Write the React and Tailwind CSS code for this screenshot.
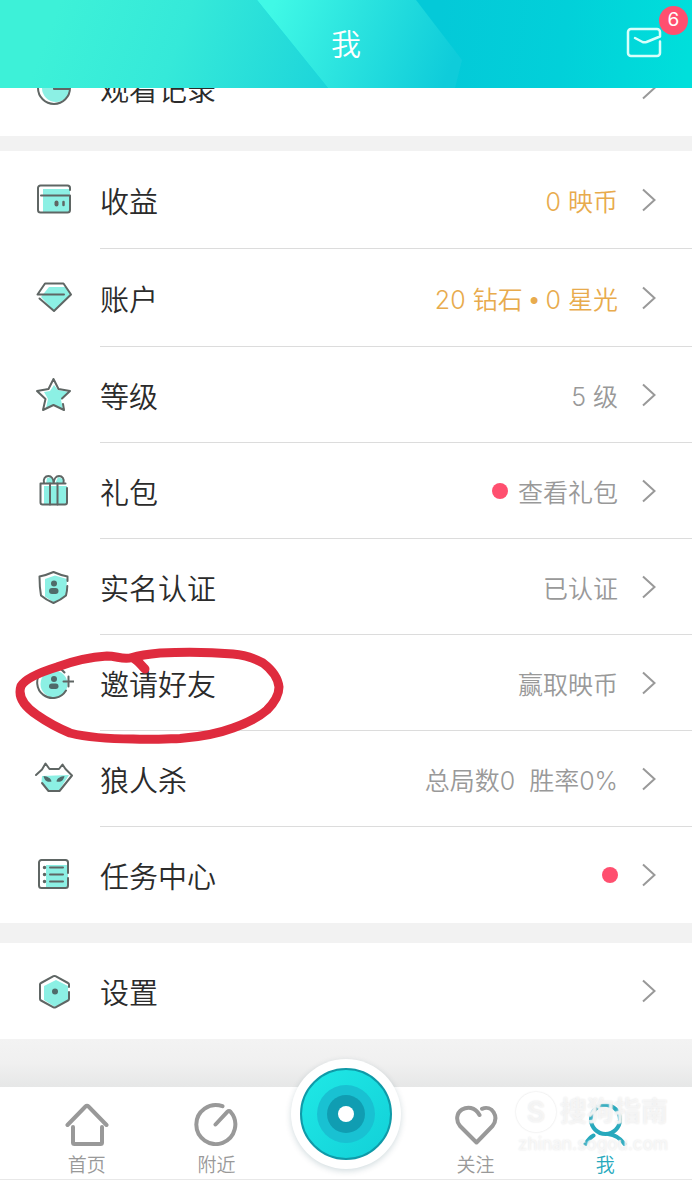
import clsx from "clsx";

const ic = "size-10 shrink-0";
const line = {
  fill: "none",
  stroke: "#5f6664",
  strokeWidth: 2,
  strokeLinecap: "round",
  strokeLinejoin: "round",
};

function HistoryIcon() {
  return (
    <svg viewBox="0 0 40 40" className={ic} aria-hidden="true">
      <circle cx="22" cy="20" r="14" fill="#8cf0e4" />
      <circle cx="20" cy="20" r="16" {...line} />
      <path d="M20 9v12h15" {...line} />
    </svg>
  );
}

function IncomeIcon() {
  return (
    <svg viewBox="0 0 40 40" className={ic} aria-hidden="true">
      <path d="M9 9h27v23H9z" fill="#8cf0e4" />
      <path
        d="M36 10V8a2.500 2.500 0 0 0-2.500-2.500h-27A2.500 2.500 0 0 0 4 8v22a2.500 2.500 0 0 0 2.500 2.500h27A2.500 2.500 0 0 0 36 30V15.500H7"
        {...line}
      />
      <path d="M22.500 22.500v2" {...line} strokeWidth="4" />
      <path d="M29.500 22v3" {...line} strokeWidth="2.500" />
    </svg>
  );
}

function DiamondIcon() {
  return (
    <svg viewBox="0 0 40 40" className={ic} aria-hidden="true">
      <path d="M15 9h17l5 7-17 17L7 19z" fill="#8cf0e4" />
      <path d="M30 16.500H3.500L11 5.500h18.500l7.500 11-17 16.500L5.500 20.500" {...line} />
    </svg>
  );
}

function StarIcon() {
  return (
    <svg viewBox="0 0 40 40" className={ic} aria-hidden="true">
      <path d="M20 10l4 5 11 2-8 8 2 9-9-4-8 3 2-9-4-7 6-1z" fill="#8cf0e4" />
      <path
        d="M28 23.500l8-7.500-11.500-2-5-10-5 10-11.500 2 8.500 8-2.500 11 10.500-5 10.500 5-1-6"
        {...line}
      />
    </svg>
  );
}

function GiftIcon() {
  return (
    <svg viewBox="0 0 40 40" className={ic} aria-hidden="true">
      <path d="M10 15h23v18H10zM13 7l5-1 2 6-8 1zM24 6l5 2 1 5h-9z" fill="#8cf0e4" />
      <path d="M31.500 12.500h-25v19a2 2 0 0 0 2 2h22.500a2 2 0 0 0 2-2V17" {...line} />
      <path d="M16 12.500v21M23.500 12.500v21" {...line} />
      <path
        d="M10 12c-1-4 1-7 4.500-7 3 0 5 3 5.200 7 .2-4 2.300-7 5.300-7 3.500 0 5.500 3 4.500 7"
        {...line}
      />
    </svg>
  );
}

function ShieldIcon() {
  return (
    <svg viewBox="0 0 40 40" className={ic} aria-hidden="true">
      <path d="M21 8.500l12 3.500-1 17-12 6.500-9-6V12z" fill="#8cf0e4" />
      <path
        d="M33.500 14V9.500C28 8.500 24 7 19.500 5 15 7 10.500 8.500 5.500 9.500c0 7 .5 13.500 1.500 19C11 32 15 34 19.500 36c4.500-2 8.500-4 12.500-7.500.8-3 1.200-6 1.300-9.500"
        {...line}
      />
      <circle cx="20" cy="16.500" r="3" fill="#4f6b6a" />
      <rect x="15" y="21" width="9.500" height="6" rx="3" fill="#4f6b6a" />
    </svg>
  );
}

function InviteIcon() {
  return (
    <svg viewBox="0 0 40 40" className={ic} aria-hidden="true">
      <circle cx="20" cy="21" r="13.500" fill="#8cf0e4" />
      <path d="M30.500 9.500A15.500 15.500 0 1 0 32 27.500M34.500 13.500v10M29.500 18.500h10" {...line} />
      <circle cx="20" cy="16" r="3" fill="#4f6b6a" />
      <rect x="15" y="20.500" width="9.500" height="5.500" rx="2.700" fill="#4f6b6a" />
    </svg>
  );
}

function WolfIcon() {
  return (
    <svg viewBox="0 0 40 40" className={ic} aria-hidden="true">
      <path d="M8 17l27-1-10 15.500H14.500L7.500 23z" fill="#8cf0e4" />
      <path
        d="M2 16l6-5.500 3.500-6 4 5.500h9.500l3.500-4.500 3 4.500 6.500 6.500-12.500 15.500h-11l-6.500-8"
        {...line}
      />
      <path d="M9.500 17c4 .5 7.500 2 8 5.500-4 1-7-.5-8-5.500zM30.500 17c-4 .5-7.500 2-8 5.500 4 1 7-.5 8-5.500z" fill="#4f6b6a" />
    </svg>
  );
}

function TaskIcon() {
  return (
    <svg viewBox="0 0 40 40" className={ic} aria-hidden="true">
      <path d="M12 10h22v23H12z" fill="#8cf0e4" />
      <path
        d="M34 18V7.500A2.500 2.500 0 0 0 31.500 5h-24A2.500 2.500 0 0 0 5 7.500v23A2.500 2.500 0 0 0 7.500 33h24a2.500 2.500 0 0 0 2.500-2.500V23"
        {...line}
      />
      <path d="M16 12.500h13M16 19.500h13M16 26.500h13" {...line} />
      <path d="M10.500 12.500h.01M10.500 19.500h.01M10.500 26.500h.01" {...line} strokeWidth="3.500" />
    </svg>
  );
}

function SettingsIcon() {
  return (
    <svg viewBox="0 0 40 40" className={ic} aria-hidden="true">
      <path d="M22 9l12 6v14l-13 7-11-7V15z" fill="#8cf0e4" />
      <path
        d="M35 16v-2.500q0-1-1-1.500L21.500 5.200q-1-.5-2 0L7 12q-1 .5-1 1.500v14.500q0 1 1 1.500l12.500 6.800q1 .5 2 0L34 29.500q1-.5 1-1.500v-7"
        {...line}
      />
      <circle cx="21" cy="20.500" r="3" fill="#4f6b6a" />
    </svg>
  );
}

function Chevron() {
  return (
    <svg viewBox="0 0 14 24" className="h-6 w-3.5 shrink-0" aria-hidden="true">
      <path d="M1 1.500l11.500 10.500L1 22.500" fill="none" stroke="#999" strokeWidth="2" />
    </svg>
  );
}

// hand-drawn red ring around the invite row
function Highlight() {
  return (
    <svg
      viewBox="12 643 276 102"
      className="pointer-events-none absolute top-2 left-3 z-10 h-[102px] w-[276px]"
      aria-hidden="true"
    >
      <path
        d="M145 669C141 665 138 660 132 657.500C123 660 117 656 107 656C90 657 73 661 57 667C41 672 25 679 21 686C17 698 25 707 37 715C47 722 58 728 70 733C90 738 112 739 133 739C150 740 165 739 180 738.500C200 737 217 734 233 728C247 723 258 718 267 710C274 703 279 696 279 687C278 678 271 669 263 663C254 658 245 655 233 654C208 652 184 652 160 653C150 654 141 655 132 657.500"
        fill="none"
        stroke="#df2b3e"
        strokeWidth="9"
        strokeLinecap="round"
        strokeLinejoin="round"
      />
    </svg>
  );
}

const balance = (
  <>
    20 钻石 <span className="font-['Liberation_Sans',sans-serif]">•</span> 0 星光
  </>
);

const groups = [
  [
    { label: "收益", icon: IncomeIcon, value: "0 映币", gold: true },
    { label: "账户", icon: DiamondIcon, value: balance, gold: true },
    { label: "等级", icon: StarIcon, value: "5 级" },
    { label: "礼包", icon: GiftIcon, value: "查看礼包", dot: true },
    { label: "实名认证", icon: ShieldIcon, value: "已认证" },
    { label: "邀请好友", icon: InviteIcon, value: "赢取映币", circled: true },
    { label: "狼人杀", icon: WolfIcon, value: "总局数0  胜率0%" },
    { label: "任务中心", icon: TaskIcon, dot: true },
  ],
  [{ label: "设置", icon: SettingsIcon }],
];

function Row({ item }) {
  const Icon = item.icon;
  return (
    <li className="group relative">
      <a
        href="#"
        className={clsx("flex items-stretch gap-[26px] pl-[34px]", item.gold ? "h-[98px]" : "h-24")}
      >
        <span className="flex items-center">
          <Icon />
        </span>
        <span className="flex flex-1 items-center gap-6 border-b border-[#dcdcdc] pr-9 group-last:border-b-0">
          <span className="flex-1 text-[29px] leading-10 font-[350] text-[#2b2b2b]">{item.label}</span>
          <span className="flex items-center gap-[10px]">
            {item.dot && <span className="size-4 rounded-full bg-[#ff4f6f]" />}
            {item.value && (
              <span
                className={clsx(
                  "pt-1 font-['Inter','Noto_Sans_CJK_SC',sans-serif] text-[25px] leading-10 font-[350] whitespace-pre",
                  item.gold ? "text-[#e8ab4d]" : "text-[#999]"
                )}
              >
                {item.value}
              </span>
            )}
          </span>
          <Chevron />
        </span>
      </a>
      {item.circled && <Highlight />}
    </li>
  );
}

function Header() {
  return (
    <header className="relative z-20 flex h-[88px] items-center justify-center overflow-hidden font-['Inter','Noto_Sans_CJK_SC',sans-serif]">
      <svg
        viewBox="0 0 692 88"
        preserveAspectRatio="none"
        className="absolute inset-0 h-full w-full"
        aria-hidden="true"
      >
        <defs>
          <linearGradient id="hd-left" gradientUnits="userSpaceOnUse" x1="60" y1="0" x2="320" y2="100">
            <stop offset="0" stopColor="#3df1d8" />
            <stop offset="0.450" stopColor="#35e9d9" />
            <stop offset="1" stopColor="#1dd5da" />
          </linearGradient>
          <linearGradient id="hd-mid" gradientUnits="userSpaceOnUse" x1="275" y1="0" x2="450" y2="70">
            <stop offset="0" stopColor="#40f9e6" />
            <stop offset="0.450" stopColor="#2be3df" />
            <stop offset="1" stopColor="#0fccda" />
          </linearGradient>
          <linearGradient id="hd-right" gradientUnits="userSpaceOnUse" x1="440" y1="0" x2="692" y2="30">
            <stop offset="0" stopColor="#04c9d8" />
            <stop offset="0.500" stopColor="#02d0d9" />
            <stop offset="1" stopColor="#00dfdb" />
          </linearGradient>
        </defs>
        <path d="M0 0h692v88H0z" fill="url(#hd-right)" />
        <path d="M0 0h257l71 88H0z" fill="url(#hd-left)" />
        <path d="M257 0h159l46 60-7 28H328z" fill="url(#hd-mid)" />
      </svg>
      <h1 className="relative text-[30px] leading-10 font-[350] text-white">我</h1>
      <button type="button" aria-label="消息" className="absolute top-6 right-[30px]">
        <svg viewBox="0 0 36 36" className="size-9" aria-hidden="true">
          <path
            d="M34 17.500V29a3 3 0 0 1-3 3H5a3 3 0 0 1-3-3V8a3 3 0 0 1 3-3h26a3 3 0 0 1 3 3v4.500L20.500 18q-2 .7-4 0L9 14"
            fill="none"
            stroke="#d8fffb"
            strokeWidth="2.500"
            strokeLinecap="round"
            strokeLinejoin="round"
          />
        </svg>
      </button>
      <span className="absolute top-[6px] right-1 flex size-[29px] items-center justify-center rounded-full bg-[#ff4f6f] text-[19px] text-white">
        6
      </span>
    </header>
  );
}

const nav = {
  fill: "none",
  stroke: "currentColor",
  strokeWidth: 4,
  strokeLinecap: "round",
  strokeLinejoin: "round",
};

function Tab({ label, active, children }) {
  return (
    <a
      href="#"
      className={clsx(
        "flex flex-col items-center gap-[6px] pt-[15px]",
        active ? "text-[#27a9bd]" : "text-[#999]"
      )}
    >
      <svg viewBox="0 0 44 44" className="size-11" aria-hidden="true">
        {children}
      </svg>
      <span className="text-[19px] leading-6 font-[350]">{label}</span>
    </a>
  );
}

function Watermark() {
  return (
    <div className="pointer-events-none absolute top-[5px] right-6 flex flex-col items-end font-['Inter','Noto_Sans_CJK_SC',sans-serif] text-white/60 [text-shadow:0_0_2px_#e2e2e2]">
      <div className="flex items-center gap-1">
        <span className="flex size-10 items-center justify-center rounded-full border-3 border-white/60 text-[28px] leading-8 font-bold shadow-[0_0_2px_#d8d8d8]">
          S
        </span>
        <span className="text-[27px] leading-10 font-bold">搜狗指南</span>
      </div>
      <div className="text-[17px] leading-6 font-medium">zhinan.sogou.com</div>
    </div>
  );
}

function TabBar() {
  return (
    <nav className="relative grid h-[93px] grid-cols-5 border-b border-[#e8e8e8] bg-white px-[22px]">
      <Tab label="首页">
        <path d="M2.500 23L20.500 4.500q1.500-1.500 3 0L41.500 23M8 25v15.500q0 1.500 1.500 1.500h26q1.500 0 1.500-1.500V25" {...nav} />
      </Tab>
      <Tab label="附近">
        <path d="M28.500 4.200A19.500 19.500 0 1 0 36.500 9.700q-1.500-1.500-3 0L21.500 22.500" {...nav} />
      </Tab>
      <div className="flex justify-center">
        <button
          type="button"
          aria-label="直播"
          className="-mt-7 flex size-[110px] shrink-0 items-center justify-center rounded-full bg-white shadow-[0_2px_6px_rgba(0,60,80,0.18)]"
        >
          <span className="flex size-[92px] items-center justify-center rounded-full border-2 border-[#0f9aa8] bg-linear-to-br from-[#1fe9e6] to-[#12d0d8]">
            <span className="flex size-[58px] items-center justify-center rounded-full bg-[#19c1d2]">
              <span className="flex size-[38px] items-center justify-center rounded-full bg-[#109db2]">
                <span className="size-4 rounded-full bg-white" />
              </span>
            </span>
          </span>
        </button>
      </div>
      <Tab label="关注">
        <path
          d="M25.500 13C21 4.500 13 4.500 8 7.500 2.500 11 1.500 18.500 6 24L22.500 40.500 38.500 24C45.500 14.500 38 2.500 28 6.800"
          {...nav}
        />
      </Tab>
      <Tab label="我" active>
        <circle cx="22.500" cy="17.500" r="14.500" {...nav} />
        <path d="M2.500 42q3.500-6 8-8.500M25 32q10 1 16.500 10" {...nav} />
      </Tab>
      <Watermark />
    </nav>
  );
}

export default function App() {
  return (
    <div className="flex min-h-screen flex-col bg-[#f2f2f2] font-['Noto_Sans_CJK_SC',sans-serif]">
      <Header />
      <main className="flex flex-1 flex-col">
        {/* list is scrolled, so this row is half hidden under the header */}
        <ul className="-mt-12 bg-white">
          <Row item={{ label: "观看记录", icon: HistoryIcon }} />
        </ul>
        <ul className="mt-[15px] bg-white">
          {groups[0].map((item) => (
            <Row key={item.label} item={item} />
          ))}
        </ul>
        <ul className="mt-5 bg-white">
          {groups[1].map((item) => (
            <Row key={item.label} item={item} />
          ))}
        </ul>
        <div className="min-h-12 flex-1 bg-linear-to-b from-[#f3f3f3] via-[#f0f0f0] to-[#e6e7e7]" />
      </main>
      <TabBar />
    </div>
  );
}
